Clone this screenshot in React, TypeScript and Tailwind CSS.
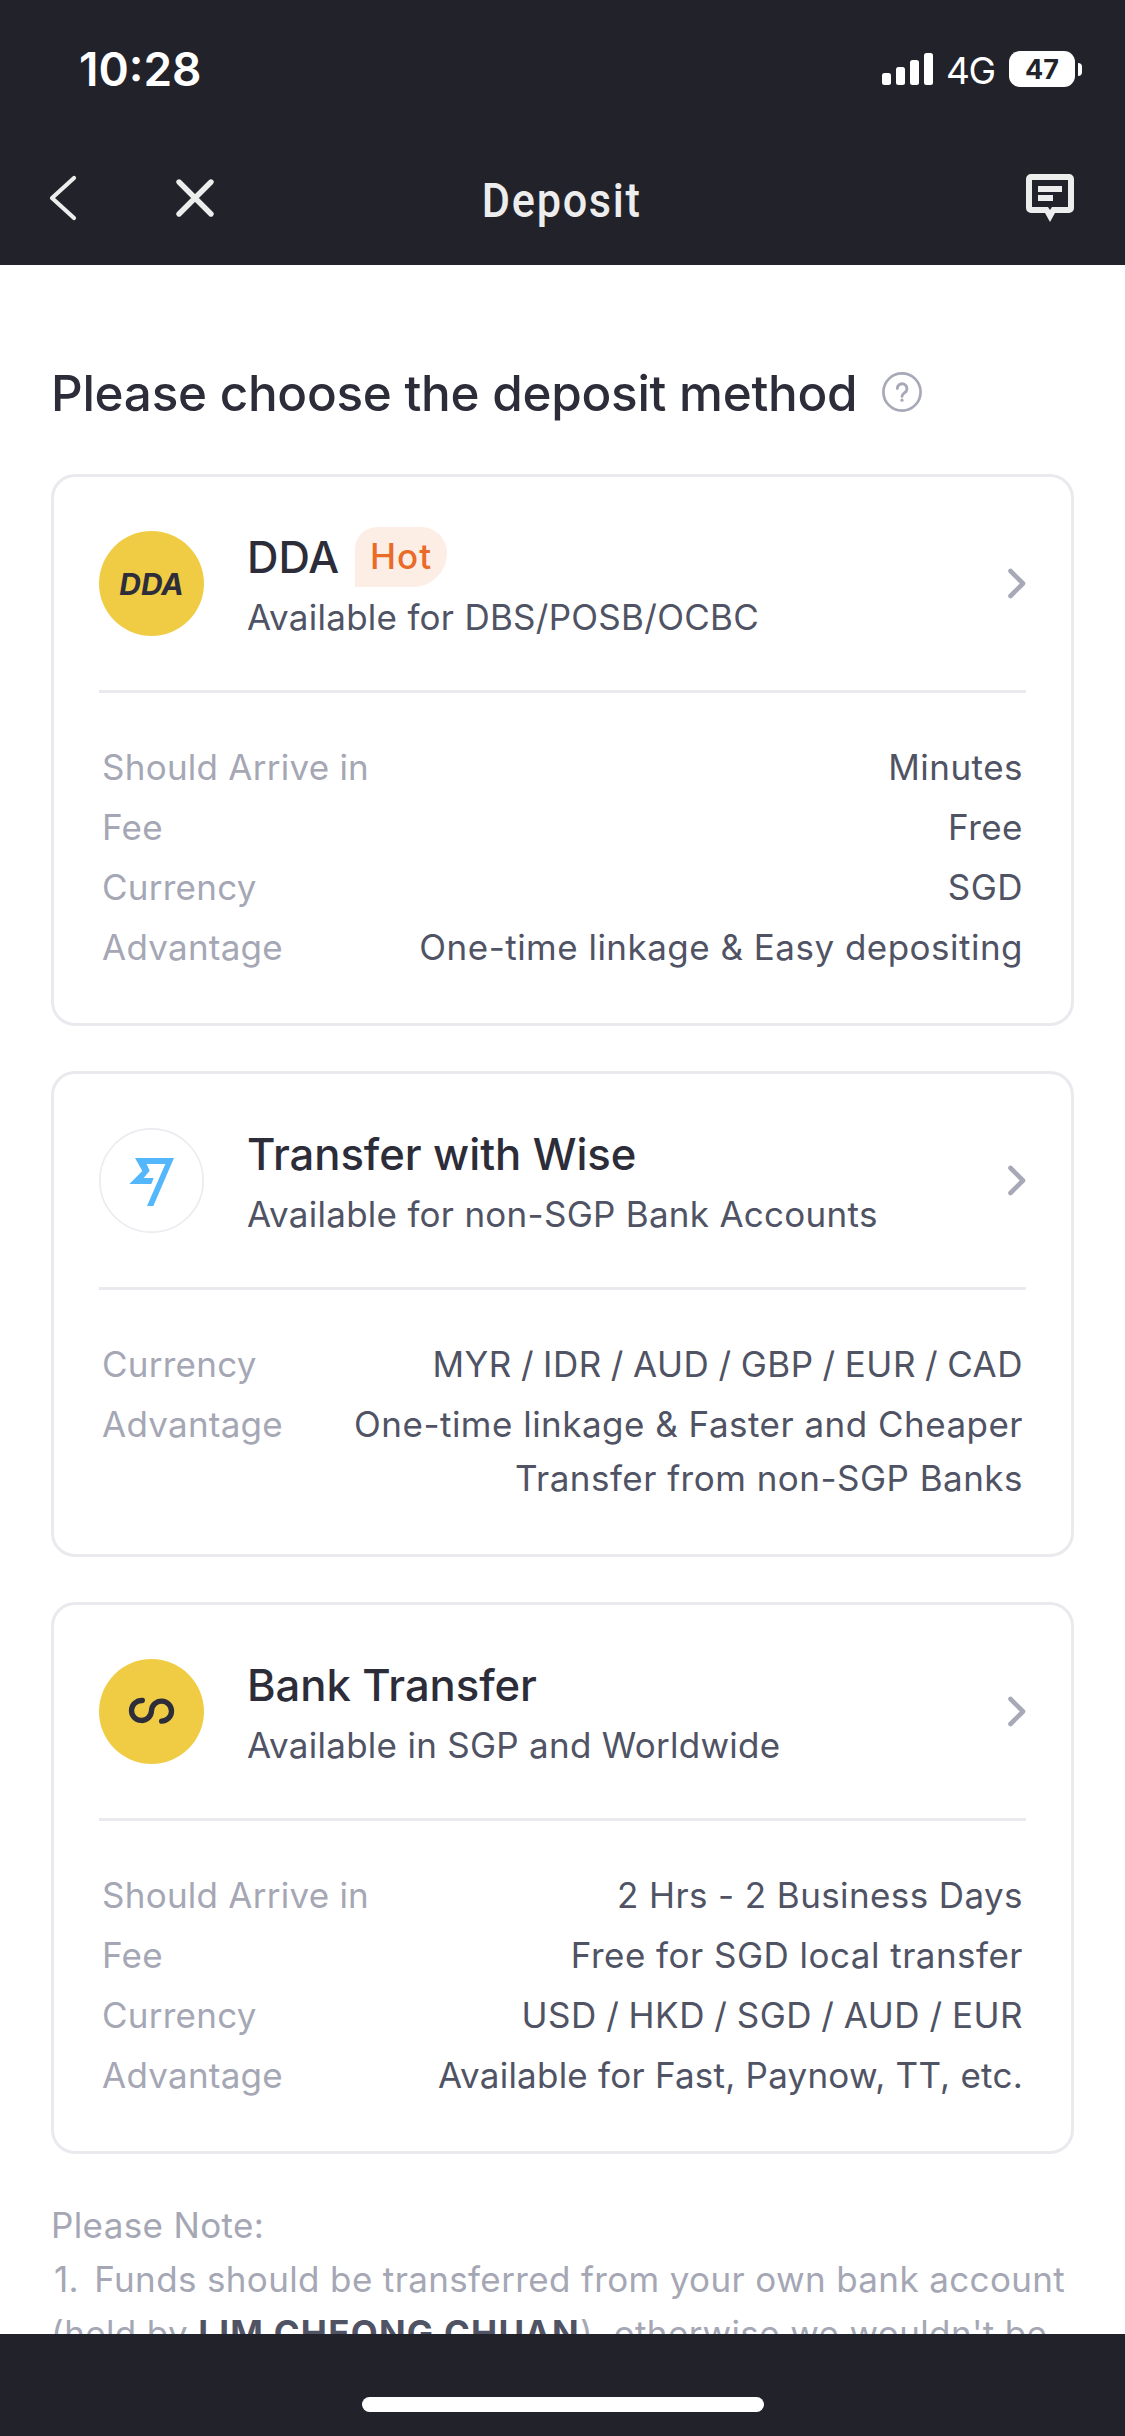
import type { ReactNode } from "react";

type Row = { label: string; value: string; valueClass?: string };

type Method = {
  title: string;
  subtitle: string;
  hot?: boolean;
  icon: ReactNode;
  rows: Row[];
};

const DdaIcon = () => (
  <div className="flex size-[105px] shrink-0 items-center justify-center rounded-full bg-[#f0cc45] text-[30px] font-bold italic leading-none text-[#2d2e3a]">
    DDA
  </div>
);

const WiseIcon = () => (
  <svg className="size-[105px] shrink-0" viewBox="0 0 315 315">
    <circle cx="157.5" cy="157.5" r="155" fill="#fff" stroke="#ebebf0" strokeWidth="5" />
    <path
      d="M108 90H225L163 234H144L199 108H143L152 128L134 150H164L157 168H91L130 129Z"
      fill="#54b7fb"
    />
  </svg>
);

const BankIcon = () => (
  <svg className="size-[105px] shrink-0" viewBox="0 0 315 315">
    <circle cx="157.5" cy="157.5" r="157.5" fill="#f0cc45" />
    <path
      d="M130 124.5A30 30 0 1 0 157.5 155A30 30 0 1 1 188 186.5"
      fill="none"
      stroke="#2d2e3a"
      strokeWidth="16"
      strokeLinecap="round"
    />
  </svg>
);

const methods: Method[] = [
  {
    title: "DDA",
    subtitle: "Available for DBS/POSB/OCBC",
    hot: true,
    icon: <DdaIcon />,
    rows: [
      { label: "Should Arrive in", value: "Minutes" },
      { label: "Fee", value: "Free" },
      { label: "Currency", value: "SGD" },
      { label: "Advantage", value: "One-time linkage & Easy depositing" },
    ],
  },
  {
    title: "Transfer with Wise",
    subtitle: "Available for non-SGP Bank Accounts",
    icon: <WiseIcon />,
    rows: [
      {
        label: "Currency",
        value: "MYR / IDR / AUD / GBP / EUR / CAD",
        valueClass: "tracking-[0.5px] [word-spacing:-1.25px]",
      },
      { label: "Advantage", value: "One-time linkage & Faster and Cheaper\nTransfer from non-SGP Banks" },
    ],
  },
  {
    title: "Bank Transfer",
    subtitle: "Available in SGP and Worldwide",
    icon: <BankIcon />,
    rows: [
      { label: "Should Arrive in", value: "2 Hrs - 2 Business Days", valueClass: "tracking-[0.4px]" },
      { label: "Fee", value: "Free for SGD local transfer" },
      {
        label: "Currency",
        value: "USD / HKD / SGD / AUD / EUR",
        valueClass: "tracking-[0.5px] [word-spacing:-1px]",
      },
      {
        label: "Advantage",
        value: "Available for Fast, Paynow, TT, etc.",
        valueClass: "tracking-[0.23px]",
      },
    ],
  },
];

const StatusBar = () => (
  <div className="flex h-[138px] items-center justify-between pl-[79px] pr-[43px] text-white">
    <span className="text-[46px] font-semibold leading-none">10:28</span>
    <div className="flex items-center">
      <svg className="h-8 w-[51px]" viewBox="0 0 51 32" fill="currentColor">
        <rect x="0" y="20" width="9" height="12" rx="2.5" />
        <rect x="14" y="14" width="9" height="18" rx="2.5" />
        <rect x="28" y="7" width="9" height="25" rx="2.5" />
        <rect x="42" y="0" width="9" height="32" rx="2.5" />
      </svg>
      <span className="ml-[13px] w-[63px] pt-[2px] text-[37px] leading-none tracking-[-1.5px]">4G</span>
      <div className="flex h-9 w-[66px] items-center justify-center rounded-[11px] bg-white text-[27px] font-bold leading-none text-[#22222a]">
        47
      </div>
      <div className="ml-[3px] h-[13px] w-1 rounded-r-full bg-white" />
    </div>
  </div>
);

const NavBar = () => (
  <nav className="flex h-[126px] items-center justify-between pl-[48px] pr-[50px] text-[#ededed]">
    <div className="flex w-[167px] items-center justify-between pb-[6px]">
      <svg className="h-[48px] w-[30px]" viewBox="0 0 30 48" fill="none" stroke="currentColor" strokeLinecap="round" strokeLinejoin="round">
        <path d="M26 4L4 24L26 44" strokeWidth="4.2" />
      </svg>
      <svg className="h-[40px] w-[40px]" viewBox="0 0 40 40" fill="none" stroke="currentColor" strokeLinecap="round">
        <path d="M4 4L36 36M36 4L4 36" strokeWidth="5.4" />
      </svg>
    </div>
    <h1 className="scale-x-90 font-[Roboto,sans-serif] text-[48px] font-medium leading-none tracking-[1.9px]">
      Deposit
    </h1>
    <div className="flex w-[167px] justify-end pb-[6px]">
      <svg className="h-[49px] w-[49px]" viewBox="0 0 49 49" fill="currentColor">
        <path
          fillRule="evenodd"
          d="M5 0H43a5 5 0 0 1 5 5V34a5 5 0 0 1-5 5H29L24 48L19 39H5a5 5 0 0 1-5-5V5a5 5 0 0 1 5-5ZM6 6V33H22L24 36L26 33H42V6Z"
        />
        <path d="M12 12H36V18H12ZM12 21H27V27H12Z" />
      </svg>
    </div>
  </nav>
);

const HelpIcon = () => (
  <svg className="size-10" viewBox="0 0 40 40" fill="none" stroke="#a8a9b8" strokeLinecap="round">
    <circle cx="20" cy="20" r="18.6" strokeWidth="2.7" />
    <path d="M15.3 16.6a4.8 4.8 0 1 1 7.6 3.9C20.9 22 20 22.6 20 24.4" strokeWidth="2.8" />
    <circle cx="20" cy="28.2" r="1.6" fill="#a8a9b8" stroke="none" />
  </svg>
);

const MethodCard = ({ method }: { method: Method }) => (
  <section className="rounded-[24px] border-[3px] border-[#e9e9ee] px-[45px] pb-[49px] pt-[54px]">
    <div className="flex h-[159px] items-start">
      {method.icon}
      <div className="ml-[43px] flex-1">
        <div className="flex h-[54px] items-center">
          <h3 className="text-[43.6px] font-medium leading-[54px] tracking-[-0.05px] text-[#2c2d39]">
            {method.title}
          </h3>
          {method.hot && (
            <span className="-mt-[3px] ml-[16px] flex h-[60px] w-[92px] items-center justify-center rounded-tl-[22px] rounded-tr-[26px] rounded-br-[34px] bg-[#fceee5] text-[35px] font-medium leading-none tracking-[1px] text-[#ea6a28]">
              Hot
            </span>
          )}
        </div>
        <p className="mt-[5px] text-[35px] leading-[54px] tracking-[0.27px] text-[#505364]">
          {method.subtitle}
        </p>
      </div>
      <svg className="mt-[36px] h-[33px] w-[19px]" viewBox="0 0 19 33" fill="none" stroke="#a8a9b8">
        <path d="M3.5 4L16 16.5L3.5 29" strokeWidth="4.6" strokeLinecap="round" strokeLinejoin="round" />
      </svg>
    </div>
    <hr className="border-t-[3px] border-[#e9e9ee]" />
    <dl className="space-y-[6px] px-[3px] pt-[47px] text-[35px] leading-[54px]">
      {method.rows.map((row) => (
        <div key={row.label} className="flex justify-between">
          <dt className="tracking-[0.25px] text-[#a5a7b5]">{row.label}</dt>
          <dd className={`whitespace-pre text-right text-[#505364] ${row.valueClass ?? "tracking-[0.48px]"}`}>
            {row.value}
          </dd>
        </div>
      ))}
    </dl>
  </section>
);

export default function App() {
  return (
    <div className="flex h-[2436px] w-[1125px] flex-col overflow-hidden bg-white font-[Inter,'Liberation_Sans',sans-serif]">
      <header className="h-[265px] shrink-0 bg-[#22222a]">
        <StatusBar />
        <NavBar />
      </header>

      <main className="h-[2069px] overflow-hidden px-[51px] pt-[98px]">
        <div className="flex h-[60px] items-center">
          <h2 className="text-[49.4px] font-medium leading-[60px] tracking-[-0.26px] text-[#2c2d39]">
            Please choose the deposit method
          </h2>
          <span className="-mt-[2px] ml-[25px]">
            <HelpIcon />
          </span>
        </div>

        <div className="mt-[51px] space-y-[45px]">
          {methods.map((method) => (
            <MethodCard key={method.title} method={method} />
          ))}
        </div>

        <div className="mt-[44px] whitespace-nowrap text-[35px] leading-[54px] tracking-[0.36px] text-[#a5a7b5]">
          <p>Please Note:</p>
          <p>
            <span className="inline-block w-[33px] pl-[3px]">1.</span> Funds should be transferred from your own bank account
          </p>
          <p>
            (held by <b className="font-bold tracking-[1.25px] text-[#505364]">LIM CHEONG CHUAN</b>), otherwise we wouldn't be
          </p>
        </div>
      </main>

      <footer className="flex h-[102px] shrink-0 items-end justify-center bg-[#22222a] pb-[24px]">
        <div className="h-[15px] w-[402px] rounded-full bg-white" />
      </footer>
    </div>
  );
}
